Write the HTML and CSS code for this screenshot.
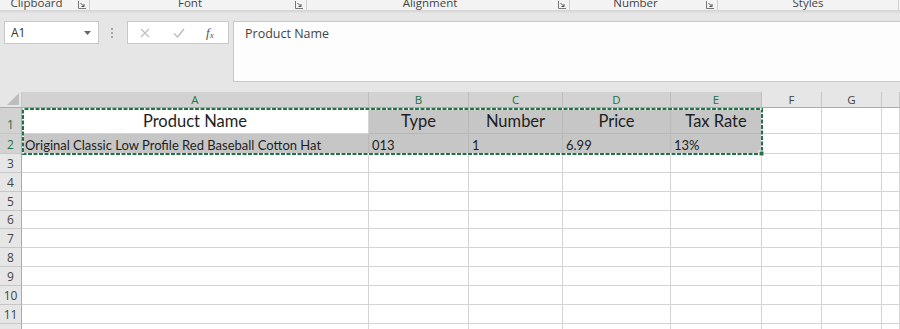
FILE: index.html
```html
<!DOCTYPE html>
<html>
<head>
<meta charset="utf-8">
<link rel="stylesheet" href="styles.css">
</head>
<body>
<div class="ribbon">
  <div class="grp g1"><span class="glabel">Clipboard</span><span class="launch"><svg width="8" height="8" viewBox="0 0 8 8"><path d="M0.5 0v7.5H8" fill="none" stroke="#777" stroke-width="1"/><path d="M2.5 2l3.5 3.5M6 3v2.5H3.5" fill="none" stroke="#555" stroke-width="1"/></svg></span></div>
  <div class="grp g2"><span class="glabel">Font</span><span class="launch"><svg width="8" height="8" viewBox="0 0 8 8"><path d="M0.5 0v7.5H8" fill="none" stroke="#777" stroke-width="1"/><path d="M2.5 2l3.5 3.5M6 3v2.5H3.5" fill="none" stroke="#555" stroke-width="1"/></svg></span></div>
  <div class="grp g3"><span class="glabel">Alignment</span><span class="launch"><svg width="8" height="8" viewBox="0 0 8 8"><path d="M0.5 0v7.5H8" fill="none" stroke="#777" stroke-width="1"/><path d="M2.5 2l3.5 3.5M6 3v2.5H3.5" fill="none" stroke="#555" stroke-width="1"/></svg></span></div>
  <div class="grp g4"><span class="glabel">Number</span><span class="launch"><svg width="8" height="8" viewBox="0 0 8 8"><path d="M0.5 0v7.5H8" fill="none" stroke="#777" stroke-width="1"/><path d="M2.5 2l3.5 3.5M6 3v2.5H3.5" fill="none" stroke="#555" stroke-width="1"/></svg></span></div>
  <div class="grp g5 nolaunch"><span class="glabel">Styles</span></div>
</div>
<div class="fbar">
  <div class="namebox"><span class="nbtext">A1</span><svg class="nbarrow" width="7" height="4" viewBox="0 0 7 4"><path d="M0 0h7L3.5 4z" fill="#666"/></svg></div>
  <div class="dots"><span></span><span></span><span></span></div>
  <div class="fxbox">
    <svg class="ic" width="10" height="10" viewBox="0 0 10 10"><path d="M1 1l8 8M9 1l-8 8" stroke="#bdbdbd" stroke-width="1.2"/></svg>
    <svg class="ic" width="12" height="10" viewBox="0 0 12 10"><path d="M1 5.5l3.5 3.5L11 1" fill="none" stroke="#bdbdbd" stroke-width="1.4"/></svg>
    <span class="fx">f<sub>x</sub></span>
  </div>
  <div class="formula">Product Name</div>
</div>
<div class="sheet">
  <div class="corner"><svg width="12" height="12" viewBox="0 0 12 12"><path d="M12 0v12H0z" fill="#bdbdbd"/></svg></div>
  <div class="ch sel">A</div><div class="ch sel">B</div><div class="ch sel">C</div><div class="ch sel">D</div><div class="ch sel">E</div><div class="ch">F</div><div class="ch">G</div><div class="ch"></div>

  <div class="rh sel">1</div>
  <div class="c big active">Product Name</div><div class="c big gray">Type</div><div class="c big gray">Number</div><div class="c big gray">Price</div><div class="c big gray">Tax Rate</div><div class="c"></div><div class="c"></div><div class="c"></div>

  <div class="rh sel">2</div>
  <div class="c sm gray">Original Classic Low Profile Red Baseball Cotton Hat</div><div class="c sm gray">013</div><div class="c sm gray">1</div><div class="c sm gray">6.99</div><div class="c sm gray">13%</div><div class="c"></div><div class="c"></div><div class="c"></div>

  <div class="rh">3</div><div class="c"></div><div class="c"></div><div class="c"></div><div class="c"></div><div class="c"></div><div class="c"></div><div class="c"></div><div class="c"></div>
  <div class="rh">4</div><div class="c"></div><div class="c"></div><div class="c"></div><div class="c"></div><div class="c"></div><div class="c"></div><div class="c"></div><div class="c"></div>
  <div class="rh">5</div><div class="c"></div><div class="c"></div><div class="c"></div><div class="c"></div><div class="c"></div><div class="c"></div><div class="c"></div><div class="c"></div>
  <div class="rh">6</div><div class="c"></div><div class="c"></div><div class="c"></div><div class="c"></div><div class="c"></div><div class="c"></div><div class="c"></div><div class="c"></div>
  <div class="rh">7</div><div class="c"></div><div class="c"></div><div class="c"></div><div class="c"></div><div class="c"></div><div class="c"></div><div class="c"></div><div class="c"></div>
  <div class="rh">8</div><div class="c"></div><div class="c"></div><div class="c"></div><div class="c"></div><div class="c"></div><div class="c"></div><div class="c"></div><div class="c"></div>
  <div class="rh">9</div><div class="c"></div><div class="c"></div><div class="c"></div><div class="c"></div><div class="c"></div><div class="c"></div><div class="c"></div><div class="c"></div>
  <div class="rh">10</div><div class="c"></div><div class="c"></div><div class="c"></div><div class="c"></div><div class="c"></div><div class="c"></div><div class="c"></div><div class="c"></div>
  <div class="rh">11</div><div class="c"></div><div class="c"></div><div class="c"></div><div class="c"></div><div class="c"></div><div class="c"></div><div class="c"></div><div class="c"></div>
  <div class="rh">12</div><div class="c"></div><div class="c"></div><div class="c"></div><div class="c"></div><div class="c"></div><div class="c"></div><div class="c"></div><div class="c"></div>

  <svg class="ants" width="742" height="49" viewBox="0 0 742 49">
    <rect x="1" y="1" width="739" height="45" fill="none" stroke="#217346" stroke-width="2"/>
    <rect x="1" y="1" width="739" height="45" fill="none" stroke="#ffffff" stroke-width="2" stroke-dasharray="1.5 4"/>
    <rect x="737" y="43" width="5" height="5" fill="#217346" stroke="#fff" stroke-width="1"/>
  </svg>
</div>
</body>
</html>
```
FILE: styles.css
```css
html, body {
  margin: 0;
  padding: 0;
}
body {
  width: 900px;
  height: 329px;
  overflow: hidden;
  background: #e6e6e6;
  font-family: "Open Sans", "Liberation Sans", sans-serif;
}
.ribbon {
  height: 10px;
  background: #f3f3f3;
  border-bottom: 1px solid #d6d6d6;
  box-shadow: 0 1px 2px rgba(0,0,0,0.08);
  display: flex;
  overflow: hidden;
  position: relative;
}
.grp {
  position: relative;
  box-sizing: border-box;
  padding-right: 16px;
  border-right: 1px solid #d0d0d0;
  display: flex;
  justify-content: center;
  height: 10px;
}
.grp.nolaunch { padding-right: 0; }
.g1 { width: 90px; }
.g2 { width: 217px; }
.g3 { width: 263px; }
.g4 { width: 148px; }
.g5 { width: 181px; }
.glabel {
  font-size: 11.5px;
  line-height: 11px;
  color: #444;
  margin-top: -3px;
  white-space: nowrap;
}
.launch {
  position: absolute;
  right: 3px;
  top: 1px;
  height: 8px;
  display: flex;
}
.fbar {
  height: 81px;
  box-sizing: border-box;
  padding-top: 10px;
  display: flex;
  align-items: flex-start;
}
.namebox {
  margin-left: 4px;
  width: 95px;
  height: 23px;
  box-sizing: border-box;
  background: #fff;
  border: 1px solid #c8c8c8;
  display: flex;
  align-items: center;
  justify-content: space-between;
  padding: 0 7px 0 6px;
}
.nbtext {
  font-size: 12px;
  color: #333;
}
.dots {
  width: 4px;
  margin: 7px 12px 0 12px;
  display: flex;
  flex-direction: column;
  gap: 2px;
}
.dots span {
  width: 2px;
  height: 2px;
  background: #aaa;
}
.fxbox {
  width: 102px;
  height: 23px;
  box-sizing: border-box;
  background: #fff;
  border: 1px solid #c8c8c8;
  display: flex;
  align-items: center;
  padding-left: 12px;
  gap: 23px;
}
.fx {
  font-family: "Liberation Serif", serif;
  font-style: italic;
  font-size: 13px;
  color: #555;
  line-height: 1;
  margin-left: -2px;
}
.fx sub {
  font-size: 9px;
  vertical-align: -1px;
}
.formula {
  margin-left: 4px;
  flex: 1;
  height: 61px;
  box-sizing: border-box;
  background: #fdfdfd;
  border: 1px solid #c8c8c8;
  border-right: none;
  padding: 3px 0 0 11px;
  font-size: 12.5px;
  color: #444;
}
.sheet {
  position: relative;
  display: grid;
  grid-template-columns: 22px 347px 100px 94px 108px 91px 60px 60px 18px;
  grid-template-rows: 16px 26px 20px 19px 19px 19px 18px 19px 19px 19px 19px 19px 19px;
  background: #fff;
  font-family: "Lato", "Open Sans", sans-serif;
}
.corner {
  background: #e6e6e6;
  border-right: 1px solid #c6c6c6;
  border-bottom: 1px solid #ababab;
  box-sizing: border-box;
  display: flex;
  align-items: flex-end;
  justify-content: flex-end;
  padding: 0 2px 2px 0;
}
.ch {
  background: #e6e6e6;
  box-sizing: border-box;
  border-right: 1px solid #c6c6c6;
  border-bottom: 1px solid #ababab;
  font-family: "Open Sans", sans-serif;
  font-size: 11.5px;
  line-height: 15px;
  text-align: center;
  color: #444;
}
.ch.sel {
  background: #d2d2d2;
  color: #217346;
  border-right-color: #bdbdbd;
}
.rh {
  background: #e6e6e6;
  box-sizing: border-box;
  border-right: 1px solid #ababab;
  border-bottom: 1px solid #c6c6c6;
  font-family: "Open Sans", sans-serif;
  font-size: 12px;
  color: #444;
  display: flex;
  align-items: flex-end;
  justify-content: center;
  line-height: 17px;
}
.rh.sel {
  background: #d2d2d2;
  color: #217346;
}
.c {
  box-sizing: border-box;
  border-right: 1px solid #d4d4d4;
  border-bottom: 1px solid #d4d4d4;
  overflow: hidden;
  white-space: nowrap;
  color: #1e1e1e;
}
.c.gray {
  background: #c6c6c6;
  border-color: #b8b8b8;
}
.c.active {
  background: #fff;
}
.c.big {
  font-size: 16.5px;
  text-align: center;
  line-height: 27px;
}
.c.sm {
  font-size: 13px;
  line-height: 20px;
  padding-left: 3px;
  padding-top: 1px;
}
.ants {
  position: absolute;
  left: 22px;
  top: 16px;
}
```
